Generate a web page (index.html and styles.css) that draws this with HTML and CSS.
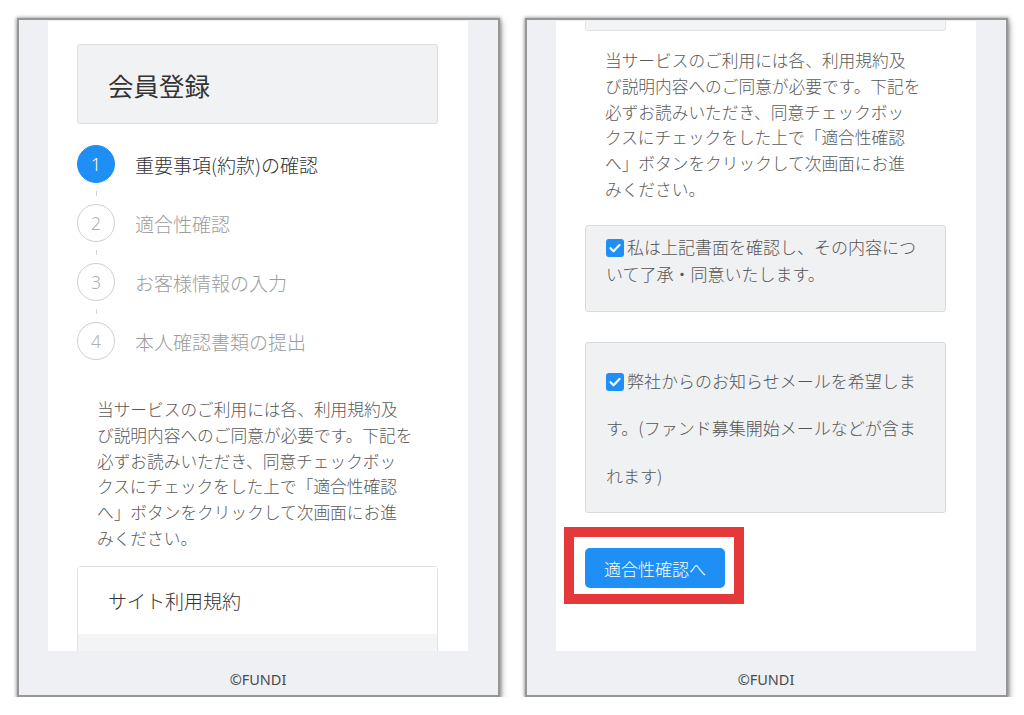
FILE: index.html
```html
<!DOCTYPE html>
<html lang="ja">
<head>
<meta charset="utf-8">
<title>会員登録</title>
<link rel="stylesheet" href="styles.css">
</head>
<body>
<div class="stage">
  <section class="phone">
    <div class="screen">
      <div class="content content-top">
        <div class="title-box"><h1 class="title">会員登録</h1></div>
        <ol class="steps">
          <li class="step active"><span class="num">1</span><span class="label">重要事項(約款)の確認</span></li>
          <li class="step"><span class="num">2</span><span class="label">適合性確認</span></li>
          <li class="step"><span class="num">3</span><span class="label">お客様情報の入力</span></li>
          <li class="step"><span class="num">4</span><span class="label">本人確認書類の提出</span></li>
        </ol>
        <p class="notice notice-left">当サービスのご利用には各、利用規約及<br>び説明内容へのご同意が必要です。下記を<br>必ずお読みいただき、同意チェックボッ<br>クスにチェックをした上で「適合性確認<br>へ」ボタンをクリックして次画面にお進<br>みください。</p>
        <div class="terms">
          <div class="terms-head">サイト利用規約</div>
          <div class="terms-body"></div>
        </div>
      </div>
    </div>
    <footer class="copy">©FUNDI</footer>
  </section>

  <section class="phone">
    <div class="screen">
      <div class="content">
        <div class="terms-tail"></div>
        <p class="notice notice-right">当サービスのご利用には各、利用規約及<br>び説明内容へのご同意が必要です。下記を<br>必ずお読みいただき、同意チェックボッ<br>クスにチェックをした上で「適合性確認<br>へ」ボタンをクリックして次画面にお進<br>みください。</p>
        <label class="agree agree-terms">
          <span class="check"><svg viewBox="0 0 18 18" width="18" height="18"><path d="M4.5 9.2l3 3 6-6.2" fill="none" stroke="#fff" stroke-width="2.2" stroke-linecap="round" stroke-linejoin="round"/></svg></span>私は上記書面を確認し、その内容について了承・同意いたします。
        </label>
        <label class="agree agree-mail">
          <span class="check"><svg viewBox="0 0 18 18" width="18" height="18"><path d="M4.5 9.2l3 3 6-6.2" fill="none" stroke="#fff" stroke-width="2.2" stroke-linecap="round" stroke-linejoin="round"/></svg></span>弊社からのお知らせメールを希望します。(ファンド募集開始メールなどが含まれます)
        </label>
        <div class="cta">
          <button class="btn" type="button">適合性確認へ</button>
          <span class="highlight" aria-hidden="true"></span>
        </div>
      </div>
    </div>
    <footer class="copy">©FUNDI</footer>
  </section>
</div>
</body>
</html>
```

FILE: styles.css
```css
* { box-sizing: border-box; }

html, body {
  margin: 0;
  padding: 0;
  background: #ffffff;
}

body {
  font-family: "Noto Sans CJK JP", "Noto Sans", sans-serif;
  color: #555;
}

.stage {
  display: flex;
  gap: 25px;
  padding: 18px 0 0 17px;
}

.phone {
  width: 483px;
  height: 679px;
  border: 2px solid #969696;
  background: #eff0f4;
  box-shadow: 0 0 3px 1px rgba(0, 0, 0, 0.28), 2px 3px 6px rgba(0, 0, 0, 0.28);
  padding: 1px 30px 0 29px;
  display: flex;
  flex-direction: column;
}

.screen {
  height: 630px;
  background: #ffffff;
  overflow: hidden;
  flex: none;
}

.content {
  padding: 0 30px 0 29px;
}

.content-top {
  padding-top: 23px;
}

.copy {
  flex: 1;
  text-align: center;
  font-family: "Noto Sans", sans-serif;
  font-size: 14.5px;
  line-height: 20px;
  color: #4a4a4a;
  padding-top: 18px;
}

/* title */
.title-box {
  height: 80px;
  background: #f1f2f4;
  border: 1px solid #dcdde0;
  border-radius: 3px;
  display: flex;
  align-items: center;
  padding: 2px 30px 0;
}

.title {
  margin: 0;
  font-size: 25.5px;
  font-weight: 400;
  color: #333;
  line-height: 1;
}

/* steps */
.steps {
  list-style: none;
  margin: 21px 0 0;
  padding: 0;
  display: flex;
  flex-direction: column;
  gap: 21px;
}

.step {
  position: relative;
  display: flex;
  align-items: center;
  gap: 20px;
  height: 38px;
}

.step + .step::before {
  content: "";
  position: absolute;
  left: 19px;
  top: -13px;
  width: 1px;
  height: 5px;
  background: #d4d4d4;
}

.num {
  width: 38px;
  height: 38px;
  border-radius: 50%;
  border: 1.5px solid #cfcfcf;
  color: #b0b0b0;
  font-family: "Noto Sans", sans-serif;
  font-size: 17.5px;
  font-weight: 300;
  display: flex;
  align-items: center;
  justify-content: center;
  flex: none;
}

.label {
  font-size: 19px;
  font-weight: 300;
  color: #9c9c9c;
  line-height: 1;
}

.step.active .num {
  background: #1f8ff5;
  border-color: #1f8ff5;
  color: #fff;
}

.step.active .label {
  color: #333;
}

/* notice */
.notice {
  margin: 37px 0 0 20px;
  font-size: 16.7px;
  font-weight: 300;
  line-height: 25.8px;
  color: #595959;
  white-space: nowrap;
}

.notice-right {
  margin-top: 17px;
}

/* terms */
.terms {
  margin-top: 14px;
  border: 1px solid #e2e3e5;
  border-radius: 3px 3px 0 0;
}

.terms-head {
  background: #fff;
  padding: 19px 30px 19px;
  font-size: 19px;
  font-weight: 300;
  line-height: 29px;
  color: #333;
}

.terms-body {
  background: #f3f4f6;
  height: 120px;
}

.terms-tail {
  height: 10px;
  background: #f3f4f6;
  border: 1px solid #e2e3e5;
  border-top: none;
  border-radius: 0 0 3px 3px;
}

/* agreements */
.agree {
  display: block;
  background: #f0f1f3;
  border: 1px solid #d9dadd;
  border-radius: 3px;
  padding: 7px 20px 24px;
  font-size: 17px;
  font-weight: 300;
  line-height: 27px;
  color: #555;
}

.agree-terms {
  margin-top: 22px;
}

.agree-mail {
  margin-top: 30px;
  padding: 14px 20px 13px;
  line-height: 47.5px;
}

.check {
  display: inline-block;
  width: 18px;
  height: 18px;
  border-radius: 3px;
  background: #1f8ff5;
  vertical-align: -3px;
  margin-right: 3px;
}

.check svg {
  display: block;
}

/* button */
.cta {
  position: relative;
  display: inline-block;
  margin-top: 35px;
}

.btn {
  display: block;
  width: 140px;
  height: 40px;
  border: none;
  border-radius: 5px;
  background: #1f8ff5;
  color: #fff;
  font-family: "Noto Sans CJK JP", sans-serif;
  font-size: 17px;
  font-weight: 300;
  padding: 0;
}

.highlight {
  position: absolute;
  left: -21px;
  top: -21px;
  right: -19px;
  bottom: -16px;
  border: 10.5px solid #e5383b;
  pointer-events: none;
}
```
